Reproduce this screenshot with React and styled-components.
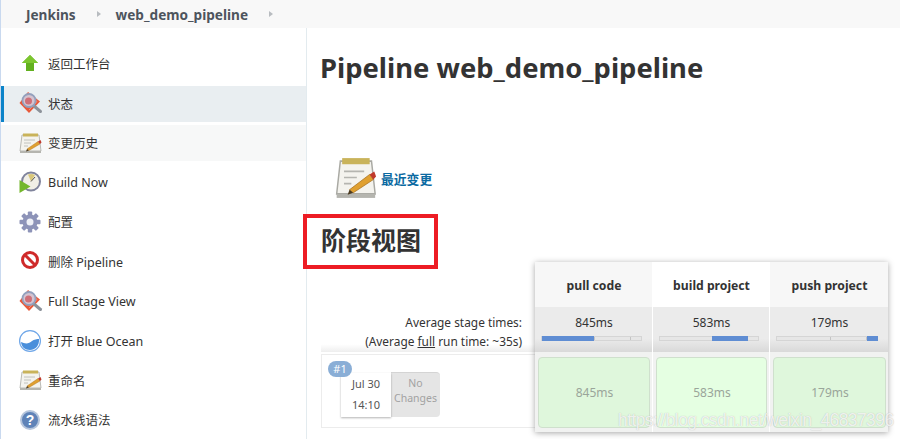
import React from 'react'
import styled, { createGlobalStyle } from 'styled-components'

const GlobalStyle = createGlobalStyle`
    html, body { margin: 0; padding: 0; background: #fff; }
    body {
        width: 900px;
        height: 439px;
        overflow: hidden;
        font-family: "Noto Sans", "Noto Sans CJK SC", sans-serif;
        color: #333;
    }
`

const Page = styled.div`
    display: flex;
    flex-direction: column;
    width: 900px;
    height: 439px;
    overflow: hidden;
    border-left: 1px solid #c9d9ef;
    box-sizing: border-box;
    position: relative;
`

const Breadcrumbs = styled.div`
    display: flex;
    align-items: center;
    height: 28px;
    flex: none;
    background: #f8f8f8;
    padding-left: 25px;
    font-size: 13.6px;
    font-weight: 700;
    color: #4d545d;
`

const Crumb = styled.span`
    margin-right: 21px;
`

const Chevron = styled.span`
    width: 0;
    height: 0;
    margin-right: 15px;
    border-left: 4px solid #b8bcc0;
    border-top: 3.5px solid transparent;
    border-bottom: 3.5px solid transparent;
`

const Body = styled.div`
    display: flex;
    flex: 1;
    min-height: 0;
`

const Sidebar = styled.nav`
    display: flex;
    flex-direction: column;
    gap: 3.6px;
    width: 305px;
    flex: none;
    padding-top: 18px;
    border-right: 1px solid #e3ebef;
`

const TaskRow = styled.div`
    display: flex;
    align-items: center;
    gap: 5px;
    height: 36px;
    flex: none;
    box-sizing: border-box;
    padding-bottom: 1px;
    padding-left: ${props => (props.$active ? '15px' : '18px')};
    background: ${props => (props.$active ? '#e9eef1' : props.$hover ? '#f7f8f8' : 'transparent')};
    border-left: ${props => (props.$active ? '3px solid #0b83c9' : 'none')};
    font-size: 12.5px;
    color: #333;
`

const TaskIcon = styled.svg`
    width: 24px;
    height: 24px;
    flex: none;
`

const Main = styled.main`
    flex: 1;
    min-width: 0;
    padding-left: 14px;
`

const Title = styled.h1`
    margin: 21px 0 0 -1px;
    font-size: 27.4px;
    line-height: 38px;
    font-weight: 700;
    color: #333;
`

const ChangesLink = styled.a`
    display: flex;
    align-items: center;
    gap: 4px;
    margin: 69px 0 0 12px;
    height: 44px;
    font-size: 12.8px;
    font-weight: 700;
    color: #0b6aa2;
`

const NoteIcon = styled.svg`
    width: 44px;
    height: 49px;
    margin-bottom: 1px;
    flex: none;
`

const SectionTitle = styled.h2`
    position: relative;
    margin: 22px 0 0;
    font-size: 25px;
    line-height: 34px;
    font-weight: 700;
    color: #333;
    font-family: "Noto Sans CJK SC", sans-serif;
`

const RedBox = styled.span`
    position: absolute;
    left: -18px;
    top: -8px;
    width: 135px;
    height: 55px;
    box-sizing: border-box;
    border: 4px solid #ed1c24;
`

const StageView = styled.div`
    display: flex;
    margin-top: 6px;
`

const RowHeads = styled.div`
    width: 214px;
    flex: none;
    padding-top: 51px;
`

const AverageLabel = styled.div`
    height: 39px;
    padding-right: 13px;
    text-align: right;
    font-size: 11.9px;
    line-height: 19px;
    color: #333;
    background: linear-gradient(to bottom, #fff 80%, #eee 100%);
    & u { text-decoration: underline; }
`

const BuildRow = styled.div`
    position: relative;
    display: flex;
    align-items: flex-start;
    height: 74px;
    margin-top: 2px;
    padding: 18px 0 0 19px;
    box-sizing: border-box;
    border: 1px solid #ececec;
    border-right: none;
`

const BuildBadge = styled.span`
    position: absolute;
    left: 6px;
    top: 6px;
    width: 24px;
    height: 16px;
    border-radius: 8px;
    background: #8aaed6;
    color: #fff;
    font-size: 11px;
    line-height: 16px;
    text-align: center;
    z-index: 2;
`

const DateBox = styled.div`
    width: 50px;
    height: 44px;
    background: #fff;
    box-shadow: 0 1px 2px rgba(0, 0, 0, 0.3);
    font-size: 11px;
    line-height: 21px;
    text-align: center;
    color: #555;
    z-index: 1;
`

const NoChanges = styled.div`
    width: 49px;
    height: 45px;
    margin-top: -1px;
    padding-top: 3px;
    box-sizing: border-box;
    border-radius: 0 4px 4px 0;
    background: #e5e5e5;
    border-top: 1px solid #d4d4d4;
    font-size: 10.5px;
    line-height: 15px;
    text-align: center;
    color: #a2a2a2;
`

const StageTable = styled.div`
    display: grid;
    grid-template-columns: 118px 117px 118px;
    width: 353px;
    flex: none;
    height: 170px;
    box-shadow: 0 1px 6px rgba(0, 0, 0, 0.35);
    background: #f1f2f1;
    z-index: 1;
`

const StageColumn = styled.div`
    display: flex;
    flex-direction: column;
    border-right: ${props => (props.$last ? 'none' : '1px solid #fff')};
`

const StageHead = styled.div`
    display: flex;
    align-items: center;
    justify-content: center;
    height: 45px;
    box-sizing: border-box;
    padding: 1px 0 0 1px;
    background: ${props => (props.$lit ? '#fff' : '#f7f7f7')};
    font-size: 12.2px;
    font-weight: 700;
    color: #333;
`

const StageAverage = styled.div`
    height: 45px;
    padding-top: 8px;
    box-sizing: border-box;
    background: linear-gradient(to bottom, #ebebeb 70%, #d9d9d9 100%);
    font-size: 12px;
    line-height: 16px;
    text-align: center;
    color: #333;
`

const AverageTime = styled.div`
    padding-left: 1px;
`

const TimeBar = styled.div`
    position: relative;
    height: 5px;
    margin: 5px 10px 0 6px;
    background: #e6e6e6;
    border: 1px solid #d5d5d5;
    box-sizing: border-box;
`

const TimeTick = styled.div`
    position: absolute;
    top: 0;
    bottom: 0;
    width: 1px;
    background: #c4c4c4;
`

const TimeFill = styled.div`
    position: absolute;
    top: -1px;
    bottom: -1px;
    background: #5f8dd3;
`

const CellWrap = styled.div`
    flex: 1;
    padding: 5px 2px 4px 3px;
    background: #f1f2f1;
`

const StageCell = styled.div`
    display: flex;
    align-items: center;
    justify-content: center;
    height: 100%;
    box-sizing: border-box;
    padding-left: 1px;
    border: 1px solid #cfe0cd;
    border-radius: 4px;
    background: ${props => (props.$lit ? '#e5ffe2' : '#dff7dc')};
    font-size: 12px;
    color: #9aa59a;
`

const Watermark = styled.span`
    position: absolute;
    left: 617px;
    top: 408px;
    font-family: "Liberation Sans", sans-serif;
    font-size: 17.5px;
    line-height: 24px;
    letter-spacing: -0.6px;
    color: rgba(255, 255, 255, 0.8);
    text-shadow: 0 0 1px rgba(140, 140, 140, 0.6);
    white-space: nowrap;
    z-index: 2;
`

const ArrowIcon = () => (
    <TaskIcon viewBox="0 0 24 24">
        <path d="M11 3 L19 11 H15 V19 H7 V11 H3 Z" fill="#62b01e" />
        <path d="M11 3 L19 11 H3 Z" fill="#7cc62f" />
    </TaskIcon>
)

const StatusIcon = () => (
    <TaskIcon viewBox="0 0 24 24">
        <path d="M9 1 L21 10.5 L10 22 L0.5 12 Z" fill="#e8593a" />
        <path d="M9 3.5 L18 10.5 L10 19" fill="none" stroke="#f3a08e" strokeWidth="0.8" />
        <path d="M15 15 L21.5 20.5" stroke="#8d929a" strokeWidth="3" strokeLinecap="round" />
        <circle cx="10" cy="9.5" r="6.5" fill="#d5c3cf" stroke="#93a0bd" strokeWidth="1.8" />
        <circle cx="9.5" cy="10" r="3.5" fill="#cf6f78" />
    </TaskIcon>
)

const NotePad = () => (
    <>
        <path d="M4 4 H21 L23 20 H2 Z" fill="#f4f3ee" stroke="#a9a9a3" strokeWidth="0.8" />
        <rect x="2" y="20" width="21" height="2" fill="#b5b5af" />
        <rect x="5" y="2.5" width="15" height="3" fill="#c9b35a" />
        <path d="M6 9 H17 M6 12 H13 M6 15 H10" stroke="#b5b5b0" strokeWidth="0.8" />
        <path d="M9 18 L20 10.5 L22 13 L11 19.5 Z" fill="#e0a030" stroke="#a8701c" strokeWidth="0.4" />
        <path d="M20 10.5 L22.5 9 L23.5 11.5 L22 13 Z" fill="#c0392b" />
        <path d="M9 18 L8 20.5 L11 19.5 Z" fill="#4a3a20" />
    </>
)

const NoteTaskIcon = () => (
    <TaskIcon viewBox="0 0 24 24">
        <g transform="translate(-1 0)"><NotePad /></g>
    </TaskIcon>
)

const BuildIcon = () => (
    <TaskIcon viewBox="0 0 24 24">
        <circle cx="12" cy="11.5" r="9" fill="#f1efe6" stroke="#80849c" strokeWidth="2" />
        <path d="M12 11.5 L9 4.5 A8 8 0 0 1 16 5 Z" fill="#d9c77a" />
        <path d="M12 11.5 L16 7" stroke="#555" strokeWidth="1" />
        <path d="M0.5 10 L11.5 16.5 L0.5 23 Z" fill="#74b72c" />
    </TaskIcon>
)

const GearIcon = () => (
    <TaskIcon viewBox="0 0 24 24">
        <g fill="#8d93b8" transform="translate(-1 0)">
            {[0, 45, 90, 135].map(angle => (
                <rect key={angle} x="9.8" y="1.5" width="4.4" height="21" rx="1" transform={`rotate(${angle} 12 12)`} />
            ))}
            <circle cx="12" cy="12" r="7.5" />
        </g>
        <circle cx="11" cy="12" r="3.5" fill="#eef0f6" />
    </TaskIcon>
)

const DeleteIcon = () => (
    <TaskIcon viewBox="0 0 24 24">
        <circle cx="11" cy="11" r="7.5" fill="#fff" stroke="#cf2a2a" strokeWidth="3" />
        <path d="M6 6 L16 16" stroke="#cf2a2a" strokeWidth="3" />
    </TaskIcon>
)

const OceanIcon = () => (
    <TaskIcon viewBox="0 0 24 24">
        <circle cx="11" cy="12" r="10.4" fill="#fff" stroke="#6ea6e8" strokeWidth="1.2" />
        <path d="M2 13 C6 15 10 15 13 12 C15 10.5 18 10 20 10 C20.5 17 16 21 11 21 C6 21 2.5 18 2 13 Z" fill="#4a8fdb" />
    </TaskIcon>
)

const HelpIcon = () => (
    <TaskIcon viewBox="0 0 24 24">
        <circle cx="11" cy="12" r="9" fill="#5f83b8" stroke="#b5c5dc" strokeWidth="2" />
        <text x="11" y="17" textAnchor="middle" fontSize="14" fontWeight="700" fill="#fff" fontFamily="Liberation Sans, sans-serif">?</text>
    </TaskIcon>
)

const tasks = [
    { label: '返回工作台', Icon: ArrowIcon },
    { label: '状态', Icon: StatusIcon, active: true },
    { label: '变更历史', Icon: NoteTaskIcon, hover: true },
    { label: 'Build Now', Icon: BuildIcon },
    { label: '配置', Icon: GearIcon },
    { label: '删除 Pipeline', Icon: DeleteIcon },
    { label: 'Full Stage View', Icon: StatusIcon },
    { label: '打开 Blue Ocean', Icon: OceanIcon },
    { label: '重命名', Icon: NoteTaskIcon },
    { label: '流水线语法', Icon: HelpIcon },
]

const stages = [
    { name: 'pull code', time: '845ms', left: 0, width: 53 },
    { name: 'build project', time: '583ms', left: 53, width: 37, lit: true },
    { name: 'push project', time: '179ms', left: 90, width: 11 },
]

export default function App() {
    return (
        <Page>
            <GlobalStyle />
            <Breadcrumbs>
                <Crumb>Jenkins</Crumb>
                <Chevron />
                <Crumb>web_demo_pipeline</Crumb>
                <Chevron />
            </Breadcrumbs>
            <Body>
                <Sidebar>
                    {tasks.map(({ label, Icon, active, hover }) => (
                        <TaskRow key={label} $active={active} $hover={hover}>
                            <Icon />
                            {label}
                        </TaskRow>
                    ))}
                </Sidebar>
                <Main>
                    <Title>Pipeline web_demo_pipeline</Title>
                    <ChangesLink>
                        <NoteIcon viewBox="0 0 24 24" preserveAspectRatio="none"><NotePad /></NoteIcon>
                        最近变更
                    </ChangesLink>
                    <SectionTitle>
                        阶段视图
                        <RedBox />
                    </SectionTitle>
                    <StageView>
                        <RowHeads>
                            <AverageLabel>
                                Average stage times:<br />
                                (Average <u>full</u> run time: ~35s)
                            </AverageLabel>
                            <BuildRow>
                                <BuildBadge>#1</BuildBadge>
                                <DateBox>Jul 30<br />14:10</DateBox>
                                <NoChanges>No Changes</NoChanges>
                            </BuildRow>
                        </RowHeads>
                        <StageTable>
                            {stages.map((stage, i) => (
                                <StageColumn key={stage.name} $last={i === stages.length - 1}>
                                    <StageHead $lit={stage.lit}>{stage.name}</StageHead>
                                    <StageAverage>
                                        <AverageTime>{stage.time}</AverageTime>
                                        <TimeBar>
                                            <TimeTick style={{ left: '53%' }} />
                                            <TimeTick style={{ left: '89%' }} />
                                            <TimeFill style={{ left: `${stage.left}%`, width: `${stage.width}%` }} />
                                        </TimeBar>
                                    </StageAverage>
                                    <CellWrap>
                                        <StageCell $lit={stage.lit}>{stage.time}</StageCell>
                                    </CellWrap>
                                </StageColumn>
                            ))}
                        </StageTable>
                    </StageView>
                </Main>
            </Body>
            <Watermark>https://blog.csdn.net/weixin_46837396</Watermark>
        </Page>
    )
}
